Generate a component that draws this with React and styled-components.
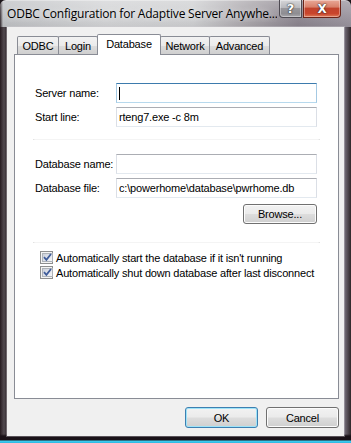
import React from "react";
import styled, { createGlobalStyle } from "styled-components";

const Global = createGlobalStyle`
  html, body { margin: 0; padding: 0; background: #1b1418; }
  body { width: 351px; height: 443px; overflow: hidden; }
  * { box-sizing: border-box; }
`;

const Window = styled.div`
  width: 351px;
  height: 443px;
  display: flex;
  flex-direction: column;
  border-radius: 6px 6px 0 0;
  background:
    linear-gradient(180deg, rgba(0,0,0,0) 0px, rgba(0,0,0,0) 434px, #1a1218 436px, #1a1218 440px, #3fd0f2 441px, #2bb6e0 443px),
    linear-gradient(90deg, #241a1e 0px, #3e3439 2px, #514a4f 4px, #3b3237 6px, #6e6770 50%, #8d8691 94%, #7a7380 98%, #2e2629 100%);
  font-family: "Liberation Sans", Arial, sans-serif;
  font-size: 11px;
  letter-spacing: -0.18px;
  color: #000;
`;

const TitleBar = styled.div`
  height: 27px;
  flex: 0 0 27px;
  display: flex;
  align-items: flex-start;
  padding: 0 10px 0 7px;
  border-radius: 6px 6px 0 0;
  background:
    linear-gradient(180deg, rgba(255,255,255,0.25) 0%, rgba(255,255,255,0.05) 60%, rgba(0,0,0,0.05) 100%),
    linear-gradient(90deg, #2c2328 0px, #bfc1c4 3px, #d3d4d6 30%, #cfd0d2 55%, #a7a3a8 72%, #8b848e 85%, #9a949e 100%);
  box-shadow: inset 0 1px 0 rgba(255,255,255,0.35);
`;

const Title = styled.div`
  flex: 1;
  min-width: 0;
  padding-top: 5px;
  font-family: "Open Sans", "Noto Sans", sans-serif;
  font-size: 12px;
  letter-spacing: -0.2px;
  white-space: nowrap;
  overflow: hidden;
  color: #000;
  text-shadow: 0 0 6px rgba(255,255,255,0.8);
`;

const CaptionGroup = styled.div`
  display: flex;
  gap: 1px;
  margin-left: 2px;
`;

const CaptionButton = styled.div`
  width: ${(p) => p.$w}px;
  height: 18px;
  display: flex;
  align-items: center;
  justify-content: center;
  border: 1px solid ${(p) => (p.$danger ? "#6b2418" : "#4e4a52")};
  border-top: none;
  border-radius: ${(p) => (p.$danger ? "0 0 4px 0" : "0 0 0 4px")};
  background: ${(p) =>
    p.$danger
      ? "linear-gradient(180deg, #e9a897 0%, #d9826c 40%, #c2432c 50%, #c9452c 80%, #de7a58 100%)"
      : "linear-gradient(180deg, #d6d6d9 0%, #b9b9bd 45%, #98979c 50%, #8e8d92 80%, #a9a8ad 100%)"};
  box-shadow: inset 0 0 0 1px rgba(255,255,255,0.35);
  color: #fff;
  font-family: "DejaVu Sans", sans-serif;
  font-weight: bold;
  font-size: ${(p) => (p.$danger ? 12 : 13)}px;
  text-shadow: 0 0 2px #333, 0 0 1px #000;
  line-height: 1;
`;

const Body = styled.div`
  flex: 1;
  display: flex;
  padding: 0 7px 7px 7px;
`;

const Client = styled.div`
  flex: 1;
  min-width: 0;
  display: flex;
  flex-direction: column;
  background: #f0f0f0;
  padding: 7px 5px 8px 7px;
  box-shadow: 0 0 0 1px rgba(210, 205, 212, 0.35);
`;

const TabStrip = styled.div`
  height: 20px;
  flex: 0 0 20px;
  display: flex;
  align-items: flex-end;
  padding-left: 3px;
  position: relative;
  z-index: 1;
`;

const Tab = styled.div`
  width: ${(p) => p.$w}px;
  height: ${(p) => (p.$active ? 21 : 18)}px;
  margin-bottom: ${(p) => (p.$active ? -1 : 0)}px;
  margin-left: -1px;
  &:first-child { margin-left: 0; }
  border: 1px solid #898c95;
  border-bottom: none;
  border-radius: 2px 2px 0 0;
  display: flex;
  align-items: center;
  justify-content: center;
  padding-bottom: ${(p) => (p.$active ? 2 : 0)}px;
  background: ${(p) =>
    p.$active ? "#ffffff" : "linear-gradient(180deg, #f2f2f2 0%, #ebebeb 50%, #dddddd 51%, #cfcfcf 100%)"};
  position: relative;
  z-index: ${(p) => (p.$active ? 2 : 1)};
  white-space: nowrap;
`;

const Panel = styled.div`
  flex: 1;
  min-width: 0;
  border: 1px solid #898c95;
  background: #ffffff;
  padding: 28px 21px 0 20px;
  display: flex;
  flex-direction: column;
`;

const FieldRow = styled.div`
  display: grid;
  grid-template-columns: 81px minmax(0, 1fr);
  align-items: center;
  height: 20px;
  margin-top: ${(p) => p.$mt || 0}px;
`;

const Label = styled.div`
  white-space: nowrap;
`;

const Field = styled.div`
  height: 20px;
  border: 1px solid;
  border-color: ${(p) =>
    p.$focused ? "#3d7bad #a4c9e3 #b7d9ed #a4c9e3" : "#abadb3 #dbdfe6 #e3e9ef #dbdfe6"};
  background: #fff;
  padding-left: 2px;
  display: flex;
  align-items: center;
  white-space: nowrap;
  overflow: hidden;
`;

const Caret = styled.span`
  display: inline-block;
  width: 1px;
  height: 13px;
  background: #000;
`;

const Separator = styled.div`
  height: 1px;
  margin: ${(p) => p.$mt}px -3px 0 -2px;
  background: linear-gradient(90deg, #dcdcdc 0px, #f4f4f4 2px, #f4f4f4 calc(100% - 2px), #dcdcdc 100%);
`;

const RightRow = styled.div`
  display: flex;
  justify-content: flex-end;
  margin-top: 6px;
`;

const Button = styled.div`
  width: ${(p) => p.$w}px;
  height: ${(p) => p.$h}px;
  display: flex;
  align-items: center;
  justify-content: center;
  border: 1px solid ${(p) => (p.$default ? "#3c7fb1" : "#707070")};
  border-radius: 3px;
  background: linear-gradient(180deg, #f2f2f2 0%, #ebebeb 48%, #dddddd 52%, #cfcfcf 100%);
  box-shadow: inset 0 0 0 1px ${(p) => (p.$default ? "#9ee3f8" : "#fcfcfc")};
  white-space: nowrap;
`;

const CheckRow = styled.div`
  display: flex;
  align-items: center;
  gap: 3px;
  height: 13px;
  padding-left: 5px;
  margin-top: ${(p) => p.$mt}px;
  white-space: nowrap;
`;

const CheckBox = styled.div`
  width: 13px;
  height: 13px;
  flex: 0 0 13px;
  border: 1px solid #8e8f8f;
  padding: 1px;
  background: #f4f4f4;
  display: flex;
`;

const CheckInner = styled.div`
  flex: 1;
  border: 1px solid #aeb3b9;
  background: linear-gradient(135deg, #cbd0da 0%, #e4e7ee 60%, #f6f7f9 100%);
  display: flex;
  align-items: center;
  justify-content: center;
`;

const ButtonRow = styled.div`
  display: flex;
  justify-content: flex-end;
  gap: 8px;
  margin-top: 8px;
`;

function Check({ label, mt }) {
  return (
    <CheckRow $mt={mt}>
      <CheckBox>
        <CheckInner>
          <svg width="9" height="9" viewBox="0 0 9 9">
            <path d="M1 4.2 L3.4 6.8 L8 1" fill="none" stroke="#3f5c9a" strokeWidth="1.8" />
          </svg>
        </CheckInner>
      </CheckBox>
      <span>{label}</span>
    </CheckRow>
  );
}

const tabs = [
  { name: "ODBC", w: 42 },
  { name: "Login", w: 40 },
  { name: "Database", w: 64, active: true },
  { name: "Network", w: 50 },
  { name: "Advanced", w: 61 },
];

export default function App() {
  return (
    <>
      <Global />
      <Window>
        <TitleBar>
          <Title>ODBC Configuration for Adaptive Server Anywhe...</Title>
          <CaptionGroup>
            <CaptionButton $w={23}>?</CaptionButton>
            <CaptionButton $w={38} $danger>X</CaptionButton>
          </CaptionGroup>
        </TitleBar>
        <Body>
          <Client>
            <TabStrip>
              {tabs.map((t) => (
                <Tab key={t.name} $w={t.w} $active={t.active}>
                  {t.name}
                </Tab>
              ))}
            </TabStrip>
            <Panel>
              <FieldRow>
                <Label>Server name:</Label>
                <Field $focused>
                  <Caret />
                </Field>
              </FieldRow>
              <FieldRow $mt={4}>
                <Label>Start line:</Label>
                <Field>rteng7.exe -c 8m</Field>
              </FieldRow>
              <Separator $mt={12} />
              <FieldRow $mt={14}>
                <Label>Database name:</Label>
                <Field />
              </FieldRow>
              <FieldRow $mt={4}>
                <Label>Database file:</Label>
                <Field>c:\powerhome\database\pwrhome.db</Field>
              </FieldRow>
              <RightRow>
                <Button $w={74} $h={20}>Browse...</Button>
              </RightRow>
              <Separator $mt={18} />
              <Check mt={8} label="Automatically start the database if it isn't running" />
              <Check mt={2} label="Automatically shut down database after last disconnect" />
            </Panel>
            <ButtonRow>
              <Button $w={73} $h={21} $default>OK</Button>
              <Button $w={73} $h={21}>Cancel</Button>
            </ButtonRow>
          </Client>
        </Body>
      </Window>
    </>
  );
}
